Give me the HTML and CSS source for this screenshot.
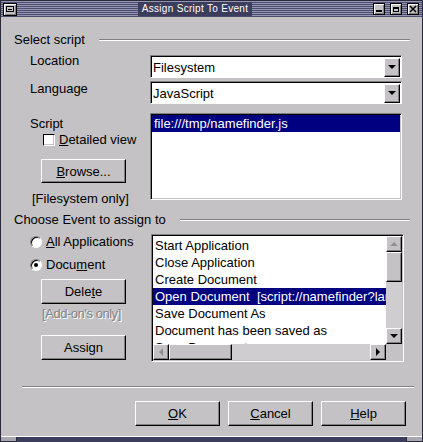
FILE: index.html
```html
<!DOCTYPE html>
<html>
<head>
<meta charset="utf-8">
<link rel="stylesheet" href="styles.css">
</head>
<body>
<div class="window">
  <div class="titlebar">
    <div class="tb-btn menu-btn"><span class="menu-icon"></span></div>
    <div class="title-area"><span class="title">Assign Script To Event</span></div>
    <div class="tb-btns">
      <div class="tb-btn"><span class="min-icon"></span></div>
      <div class="tb-btn"><span class="max-icon"></span></div>
      <div class="tb-btn">
        <svg class="close-icon" width="8" height="8" viewBox="0 0 8 8"><path d="M1 1 L7 7 M7 1 L1 7" stroke="#000" stroke-width="1.6" fill="none"/></svg>
      </div>
    </div>
  </div>

  <div class="content">
    <div class="section-head"><span>Select script</span><div class="etch"></div></div>

    <div class="row row-first">
      <div class="label label-up">Location</div>
      <div class="combo">
        <span class="combo-text">Filesystem</span>
        <div class="combo-btn"><span class="arrow-down"></span></div>
      </div>
    </div>
    <div class="row row-gap3">
      <div class="label">Language</div>
      <div class="combo">
        <span class="combo-text">JavaScript</span>
        <div class="combo-btn"><span class="arrow-down"></span></div>
      </div>
    </div>
    <div class="row row-gap9">
      <div class="left-col">
        <div class="script-label">Script</div>
        <div class="check-row"><span class="checkbox"></span><span><u>D</u>etailed view</span></div>
        <div class="button browse-btn"><u>B</u>rowse...</div>
        <div class="note">[Filesystem only]</div>
      </div>
      <div class="listbox script-list">
        <div class="list-row selected">file:///tmp/namefinder.js</div>
      </div>
    </div>

    <div class="section-head head2"><span>Choose Event to assign to</span><div class="etch"></div></div>

    <div class="row event-row">
      <div class="left-col">
        <div class="radio-row"><span class="radio"></span><span><u>A</u>ll Applications</span></div>
        <div class="radio-row radio-second"><span class="radio checked"><span class="dot"></span></span><span>Docu<u>m</u>ent</span></div>
        <div class="button delete-btn">Dele<u>t</u>e</div>
        <div class="disabled-note">[Add-on's only]</div>
        <div class="button assign-btn">Assign</div>
      </div>
      <div class="listbox event-list">
        <div class="event-rows">
          <div class="list-row">Start Application</div>
          <div class="list-row">Close Application</div>
          <div class="list-row">Create Document</div>
          <div class="list-row selected">Open Document&nbsp;&nbsp;[script://namefinder?language=JavaScript&amp;location=filesystem]</div>
          <div class="list-row">Save Document As</div>
          <div class="list-row">Document has been saved as</div>
          <div class="list-row">Save Document</div>
        </div>
        <div class="vscroll">
          <div class="sb-btn"><span class="arrow-up grey"></span></div>
          <div class="sb-thumb v-thumb"></div>
          <div class="sb-track"></div>
          <div class="sb-btn"><span class="arrow-down"></span></div>
        </div>
        <div class="hscroll">
          <div class="sb-btn"><span class="arrow-left grey"></span></div>
          <div class="sb-thumb h-thumb"></div>
          <div class="sb-track"></div>
          <div class="sb-btn"><span class="arrow-right"></span></div>
        </div>
        <div class="corner"></div>
      </div>
    </div>

    <div class="separator"></div>

    <div class="footer">
      <div class="button foot-btn"><u>O</u>K</div>
      <div class="button foot-btn"><u>C</u>ancel</div>
      <div class="button foot-btn"><u>H</u>elp</div>
    </div>
  </div>

  <div class="bottom-frame">
    <div class="bf-corner"></div>
    <div class="bf-mid"></div>
    <div class="bf-corner"></div>
  </div>
</div>
</body>
</html>
```

FILE: styles.css
```css
html, body {
  margin: 0;
  padding: 0;
}
body {
  width: 423px;
  height: 442px;
  overflow: hidden;
  font-family: "Liberation Sans", Arial, sans-serif;
  font-size: 13px;
  color: #000;
  background: #c4c2c4;
}
u { text-decoration: underline; text-underline-offset: 1px; }

.window {
  width: 423px;
  height: 442px;
  box-sizing: border-box;
  display: flex;
  flex-direction: column;
  background: #c4c2c4;
  border-left: 1px solid #2a2a3a;
  border-right: 1px solid #2a2a3a;
  border-top: 1px solid #2a2a3a;
}

/* title bar */
.titlebar {
  height: 16px;
  flex: none;
  display: flex;
  align-items: center;
  padding: 0 3px 0 2px;
  background: repeating-linear-gradient(to bottom, #9494b4 0 1px, #4c4c6c 1px 2px);
}
.tb-btn {
  width: 12px;
  height: 12px;
  box-sizing: border-box;
  background: #c4c2c4;
  border: 1px solid #000;
  box-shadow: inset 1px 1px #fff, inset -1px -1px #808080;
  display: flex;
  align-items: center;
  justify-content: center;
  position: relative;
}
.menu-btn {
  width: 14px;
  height: 13px;
}
.menu-icon {
  width: 8px;
  height: 6px;
  box-sizing: border-box;
  border: 1px solid #000;
  background: linear-gradient(#000, #000) center / 4px 1px no-repeat;
}
.title-area {
  flex: 1;
  display: flex;
  justify-content: center;
}
.title {
  color: #fff;
  background: #3c3c5c;
  font-size: 10px;
  line-height: 14px;
  letter-spacing: 0.3px;
  padding: 0 4px;
}
.tb-btns {
  display: flex;
  gap: 5px;
}
.min-icon {
  position: absolute;
  left: 2px;
  bottom: 2px;
  width: 6px;
  height: 2px;
  background: #000;
}
.max-icon {
  width: 6px;
  height: 5px;
  box-sizing: border-box;
  border: 1px solid #000;
  border-top-width: 2px;
}

/* content */
.content {
  flex: 1;
  display: flex;
  flex-direction: column;
  padding: 15px 12px 0 13px;
  min-height: 0;
}
.section-head {
  display: flex;
  align-items: center;
  gap: 14px;
  height: 15px;
  line-height: 15px;
}
.head2 { margin-top: 6px; }
.etch {
  flex: 1;
  height: 0;
  border-top: 1px solid #808080;
  border-bottom: 1px solid #fff;
}

.row {
  display: flex;
  align-items: flex-start;
}
.row-first { margin-top: 8px; }
.row-gap3 { margin-top: 3px; }
.row-gap9 { margin-top: 9px; }
.label {
  width: 120px;
  padding-left: 16px;
  line-height: 15px;
}
.label-up { margin-top: -2px; }

.combo {
  width: 252px;
  height: 23px;
  box-sizing: border-box;
  border: 1px solid;
  border-color: #808080 #fff #fff #808080;
  box-shadow: inset 1px 1px #000;
  background: #fff;
  display: flex;
  align-items: center;
}
.combo-text {
  flex: 1;
  padding-left: 2px;
  padding-top: 1px;
}
.combo-btn {
  width: 16px;
  height: 19px;
  margin-right: 1px;
  margin-top: 1px;
  box-sizing: border-box;
  background: #c4c2c4;
  border: 1px solid;
  border-color: #fff #000 #000 #fff;
  box-shadow: inset -1px -1px #808080;
  display: flex;
  align-items: center;
  justify-content: center;
}

.arrow-down, .arrow-up, .arrow-left, .arrow-right {
  width: 0;
  height: 0;
  display: block;
}
.arrow-down {
  border-left: 4px solid transparent;
  border-right: 4px solid transparent;
  border-top: 4px solid #000;
}
.arrow-up {
  border-left: 4px solid transparent;
  border-right: 4px solid transparent;
  border-bottom: 4px solid #000;
}
.arrow-left {
  border-top: 4px solid transparent;
  border-bottom: 4px solid transparent;
  border-right: 4px solid #000;
}
.arrow-right {
  border-top: 4px solid transparent;
  border-bottom: 4px solid transparent;
  border-left: 4px solid #000;
}
.arrow-up.grey { border-bottom-color: #909090; }
.arrow-left.grey { border-right-color: #909090; }

.left-col {
  width: 120px;
  padding-left: 16px;
  display: flex;
  flex-direction: column;
  align-items: flex-start;
}
.script-label {
  padding-top: 3px;
  line-height: 15px;
}
.check-row {
  margin-top: 1px;
  margin-left: 13px;
  display: flex;
  align-items: center;
  gap: 4px;
  line-height: 15px;
}
.checkbox {
  width: 12px;
  height: 12px;
  box-sizing: border-box;
  background: #fff;
  border: 1px solid;
  border-color: #000 #fff #fff #000;
  box-shadow: inset -1px -1px #c4c2c4;
}

.button {
  box-sizing: border-box;
  background: #c4c2c4;
  border: 1px solid;
  border-color: #fff #000 #000 #fff;
  box-shadow: inset -1px -1px #808080;
  display: flex;
  align-items: center;
  justify-content: center;
  line-height: 15px;
}
.browse-btn {
  width: 85px;
  height: 24px;
  margin-top: 12px;
  margin-left: 11px;
}
.note {
  margin-top: 8px;
  margin-left: 2px;
  line-height: 15px;
}

.listbox {
  box-sizing: border-box;
  background: #fff;
  border: 1px solid;
  border-color: #808080 #fff #fff #808080;
  box-shadow: inset 1px 1px #000, inset -1px -1px #c4c2c4;
  overflow: hidden;
}
.script-list {
  width: 252px;
  height: 87px;
  padding: 1px;
}
.list-row {
  height: 17px;
  line-height: 17px;
  padding-left: 2px;
  white-space: nowrap;
  overflow: hidden;
}
.list-row.selected {
  background: #000080;
  color: #fff;
}

.event-row { margin-top: 7px; }
.radio-row {
  display: flex;
  align-items: center;
  gap: 4px;
  line-height: 15px;
}
.radio-second { margin-top: 8px; }
.radio {
  width: 12px;
  height: 12px;
  box-sizing: border-box;
  border-radius: 50%;
  background: #fff;
  border: 1px solid;
  border-color: #808080 #fff #fff #808080;
  box-shadow: inset 1px 1px #000;
  display: flex;
  align-items: center;
  justify-content: center;
}
.radio .dot {
  width: 4px;
  height: 4px;
  border-radius: 50%;
  background: #000;
}
.delete-btn {
  width: 85px;
  height: 25px;
  margin-top: 7px;
  margin-left: 11px;
}
.disabled-note {
  margin-top: 2px;
  margin-left: 12px;
  line-height: 15px;
  color: #848284;
  text-shadow: 1px 1px #fff;
  letter-spacing: -0.45px;
}
.assign-btn {
  width: 85px;
  height: 25px;
  margin-top: 14px;
  margin-left: 11px;
}

.event-list {
  width: 253px;
  height: 128px;
  margin-left: 1px;
  padding: 1px;
  display: grid;
  grid-template-columns: 1fr 16px;
  grid-template-rows: 1fr 16px;
}
.event-rows {
  padding-top: 1px;
  overflow: hidden;
  min-width: 0;
  min-height: 0;
}
.vscroll {
  display: flex;
  flex-direction: column;
  background: #d0cdd0;
  min-height: 0;
}
.hscroll {
  display: flex;
  background: #d0cdd0;
  min-width: 0;
}
.corner { background: #c4c2c4; }
.sb-btn {
  width: 16px;
  height: 16px;
  flex: none;
  box-sizing: border-box;
  background: #c4c2c4;
  border: 1px solid;
  border-color: #fff #000 #000 #fff;
  box-shadow: inset -1px -1px #808080;
  display: flex;
  align-items: center;
  justify-content: center;
}
.sb-thumb {
  flex: none;
  box-sizing: border-box;
  background: #c4c2c4;
  border: 1px solid;
  border-color: #fff #000 #000 #fff;
  box-shadow: inset -1px -1px #808080;
}
.v-thumb { width: 16px; height: 30px; }
.h-thumb { width: 63px; height: 16px; }
.sb-track { flex: 1; }

.separator {
  margin-top: 24px;
  margin-left: 8px;
  margin-right: -4px;
  height: 0;
  border-top: 1px solid #808080;
  border-bottom: 1px solid #fff;
}
.footer {
  margin-top: 13px;
  margin-right: 4px;
  display: flex;
  justify-content: flex-end;
  gap: 8px;
}
.foot-btn {
  width: 85px;
  height: 25px;
}

.bottom-frame {
  height: 6px;
  flex: none;
  display: flex;
  border-top: 1px solid #fff;
  box-sizing: border-box;
}
.bf-corner {
  width: 15px;
  background: #a8a6b0;
  border-bottom: 1px solid #2a2a3a;
}
.bf-mid {
  flex: 1;
  background: #3c3c5c;
  border-left: 1px solid #2a2a3a;
  border-right: 1px solid #2a2a3a;
}
```
